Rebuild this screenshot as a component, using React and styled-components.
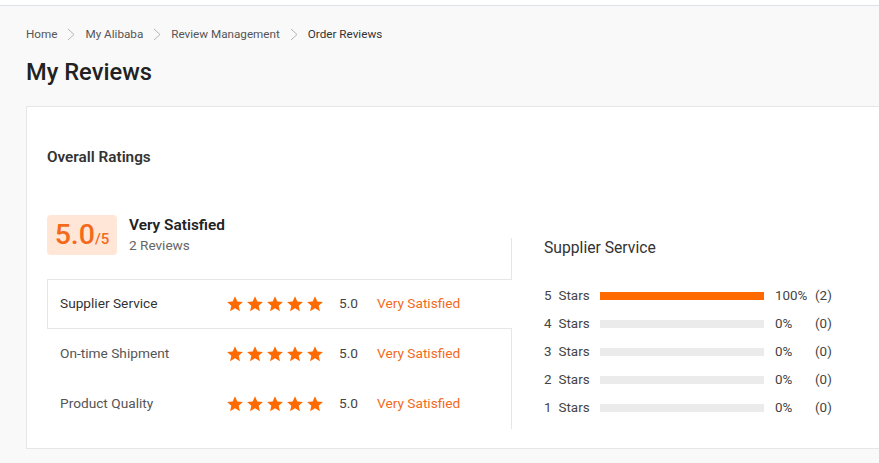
import React from "react";
import styled, { createGlobalStyle } from "styled-components";

const Global = createGlobalStyle`
  html, body { margin: 0; padding: 0; }
  body {
    background: #f9f9f9;
    font-family: Roboto, "Liberation Sans", Arial, sans-serif;
    color: #333;
    overflow: hidden;
    width: 879px;
    height: 463px;
  }
`;

const Page = styled.div`
  min-height: 463px;
  background: #f9f9f9;
`;

const TopStrip = styled.div`
  height: 5px;
  background: #fff;
  border-bottom: 1px solid #dde1e8;
`;

const Main = styled.main`
  padding: 21px 0 0 26px;
`;

const Crumbs = styled.nav`
  display: flex;
  align-items: center;
  height: 14px;
  font-size: 11.7px;
  line-height: 14px;
  color: #555;
`;

const Crumb = styled.span`
  color: ${(p) => (p.$current ? "#333" : "#555")};
`;

const Sep = styled.span`
  display: inline-flex;
  align-items: center;
  margin: 0 10px 0 10px;
  color: #b5b5b5;
`;

const Title = styled.h1`
  margin: 16px 0 0;
  font-size: 23.7px;
  line-height: 30px;
  font-weight: 500;
  color: #222;
`;

const Card = styled.section`
  margin-top: 19px;
  width: 900px;
  background: #fff;
  border: 1px solid #e6e6e6;
  padding: 40px 20px 19px;
  box-sizing: border-box;
`;

const CardTitle = styled.h2`
  margin: 0;
  font-size: 15.3px;
  line-height: 20px;
  font-weight: 600;
  color: #333;
`;

const Body = styled.div`
  display: flex;
  margin-top: 48px;
`;

const LeftCol = styled.div`
  width: 465px;
  box-sizing: border-box;
`;

const Summary = styled.div`
  position: relative;
  display: flex;
  align-items: flex-start;
  gap: 12px;
  height: 64px;
  &::after {
    content: "";
    position: absolute;
    right: 0;
    top: 23px;
    bottom: 0;
    border-right: 1px solid #e6e6e6;
  }
`;

const ScoreBox = styled.div`
  width: 70px;
  height: 40px;
  border-radius: 4px;
  background: #ffe6d6;
  display: flex;
  align-items: baseline;
  justify-content: center;
  color: #f36a1c;
  line-height: 40px;
  font-weight: 500;
`;

const ScoreBig = styled.span`
  font-size: 28.5px;
`;

const ScoreSmall = styled.span`
  font-size: 15px;
`;

const SummaryText = styled.div`
  display: flex;
  flex-direction: column;
  padding-top: 1px;
`;

const SummaryHead = styled.div`
  font-size: 15.4px;
  line-height: 18px;
  font-weight: 600;
  color: #222;
`;

const SummarySub = styled.div`
  margin-top: 3px;
  font-size: 13.6px;
  line-height: 16px;
  color: #666;
`;

const TabList = styled.div`
  display: flex;
  flex-direction: column;
`;

const TabRow = styled.div`
  display: grid;
  grid-template-columns: 166px 113px 38px auto;
  align-items: center;
  height: 50px;
  box-sizing: border-box;
  padding: 0 0 2px 12px;
  font-size: 13.7px;
  background: #fff;
  border-left: 1px solid transparent;
  border-right: 1px solid #e6e6e6;
  ${(p) =>
    p.$active &&
    `
    border: 1px solid #e6e6e6;
    border-right: none;
  `}
`;

const TabLabel = styled.span`
  color: ${(p) => (p.$active ? "#333" : "#555")};
`;

const Stars = styled.span`
  display: inline-flex;
  gap: 2px;
  align-items: center;
  margin-top: 1px;
`;

const Num = styled.span`
  color: #444;
`;

const Verdict = styled.span`
  color: #f36a1c;
`;

const RightCol = styled.div`
  margin-left: 32px;
  padding-top: 23px;
  width: 300px;
`;

const PanelTitle = styled.div`
  font-size: 15.7px;
  line-height: 20px;
  color: #333;
`;

const Dist = styled.div`
  margin-top: 23px;
  display: flex;
  flex-direction: column;
`;

const DistRow = styled.div`
  display: flex;
  align-items: center;
  height: 28px;
  font-size: 13.4px;
  color: #444;
`;

const DistLabel = styled.span`
  width: 56px;
  display: inline-flex;
  gap: 7px;
`;

const Bar = styled.div`
  width: 164px;
  height: 8px;
  background: #ebebeb;
  margin-top: 1px;
`;

const BarFill = styled.div`
  height: 100%;
  background: #ff6a00;
`;

const Pct = styled.span`
  margin-left: 11px;
  width: 40px;
`;

const StarIcon = () => (
  <svg width="18" height="18" viewBox="0 0 24 24" aria-hidden="true">
    <path
      fill="#ff6a00"
      d="M12 1.6l3.1 6.9 7.4.7-5.6 5 1.7 7.4L12 17.8l-6.6 3.8 1.7-7.4-5.6-5 7.4-.7z"
    />
  </svg>
);

const Chevron = () => (
  <svg width="8" height="13" viewBox="0 0 8 13" aria-hidden="true">
    <polyline points="1,1 7,6.5 1,12" fill="none" stroke="#b5b5b5" strokeWidth="1" />
  </svg>
);

const crumbs = ["Home", "My Alibaba", "Review Management", "Order Reviews"];
const aspects = ["Supplier Service", "On-time Shipment", "Product Quality"];
const dist = [
  { s: 5, p: 100, c: 2 },
  { s: 4, p: 0, c: 0 },
  { s: 3, p: 0, c: 0 },
  { s: 2, p: 0, c: 0 },
  { s: 1, p: 0, c: 0 },
];

export default function App() {
  return (
    <Page>
      <Global />
      <TopStrip />
      <Main>
        <Crumbs>
          {crumbs.map((c, i) => (
            <React.Fragment key={c}>
              {i > 0 && (
                <Sep>
                  <Chevron />
                </Sep>
              )}
              <Crumb $current={i === crumbs.length - 1}>{c}</Crumb>
            </React.Fragment>
          ))}
        </Crumbs>
        <Title>My Reviews</Title>
        <Card>
          <CardTitle>Overall Ratings</CardTitle>
          <Body>
            <LeftCol>
              <Summary>
                <ScoreBox>
                  <ScoreBig>5.0</ScoreBig>
                  <ScoreSmall>/5</ScoreSmall>
                </ScoreBox>
                <SummaryText>
                  <SummaryHead>Very Satisfied</SummaryHead>
                  <SummarySub>2 Reviews</SummarySub>
                </SummaryText>
              </Summary>
              <TabList>
                {aspects.map((a, i) => (
                  <TabRow key={a} $active={i === 0}>
                    <TabLabel $active={i === 0}>{a}</TabLabel>
                    <Stars>
                      {[0, 1, 2, 3, 4].map((k) => (
                        <StarIcon key={k} />
                      ))}
                    </Stars>
                    <Num>5.0</Num>
                    <Verdict>Very Satisfied</Verdict>
                  </TabRow>
                ))}
              </TabList>
            </LeftCol>
            <RightCol>
              <PanelTitle>Supplier Service</PanelTitle>
              <Dist>
                {dist.map((d) => (
                  <DistRow key={d.s}>
                    <DistLabel>
                      <span>{d.s}</span>
                      <span>Stars</span>
                    </DistLabel>
                    <Bar>
                      <BarFill style={{ width: `${d.p}%` }} />
                    </Bar>
                    <Pct>{d.p}%</Pct>
                    <span>({d.c})</span>
                  </DistRow>
                ))}
              </Dist>
            </RightCol>
          </Body>
        </Card>
      </Main>
    </Page>
  );
}
